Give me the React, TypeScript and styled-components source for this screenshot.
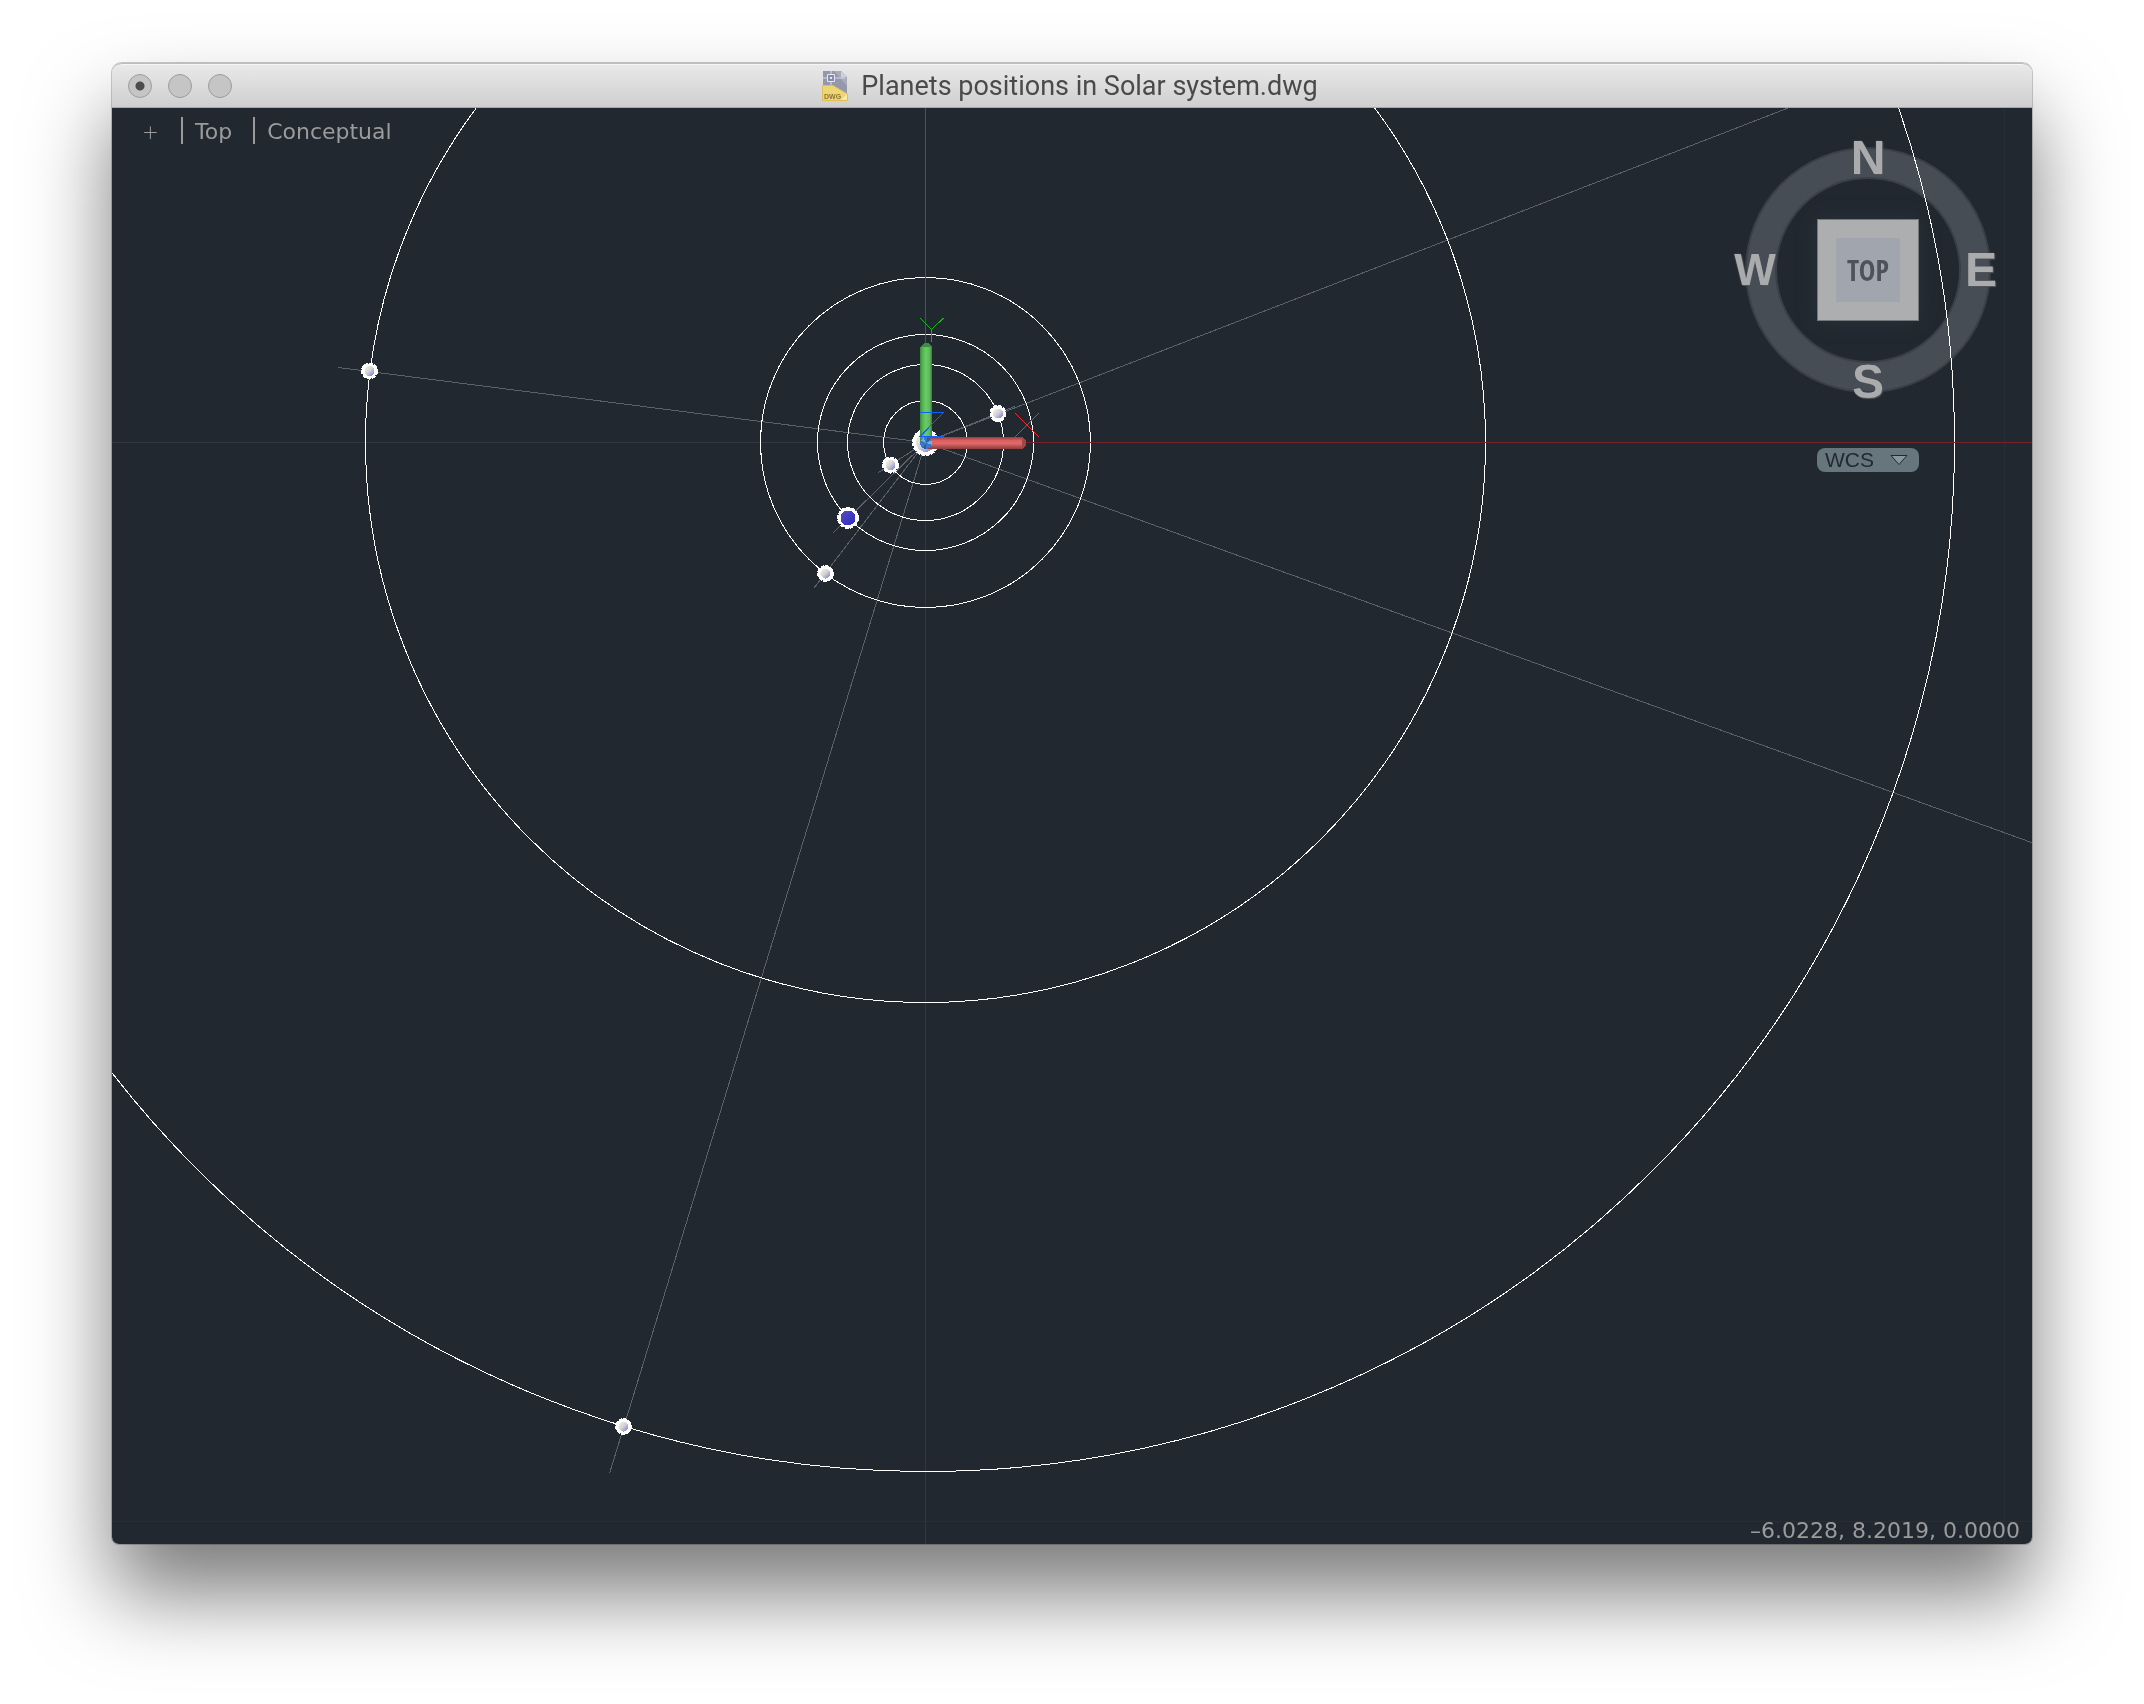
import React from "react";
import styled, { createGlobalStyle } from "styled-components";

const GlobalStyle = createGlobalStyle`
  *, *::before, *::after { box-sizing: border-box; }
  body { margin: 0; background: #fff; }
  button, select { margin: 0; padding: 0; border: 0; background: none; color: inherit; font: inherit; }
`;

const uiFont = `"DejaVu Sans", "Noto Sans", sans-serif`;
const sansFont = `"Liberation Sans", Arial, sans-serif`;

const Page = styled.main`
  padding: 63px 112px 150px;
  overflow: hidden;
`;

const Window = styled.section`
  border-radius: 10px 10px 7px 7px;
  box-shadow: 0 0 0 1px rgba(0, 0, 0, 0.2), 0 50px 84px rgba(0, 0, 0, 0.52);
`;

const TitleBar = styled.header`
  display: grid;
  grid-template-columns: 1fr auto 1fr;
  align-items: center;
  height: 45px;
  padding-left: 16px;
  border-top: 1px solid #bcbcbc;
  border-bottom: 1px solid #a8a8a8;
  border-radius: 10px 10px 0 0;
  background: linear-gradient(#e9e9e9, #cfcfcf);
  box-shadow: inset 0 1px 0 #f5f5f5;
`;

const Lights = styled.div`
  display: flex;
  gap: 16px;
`;

const Light = styled.button<{ $edited?: boolean }>`
  width: 24px;
  height: 24px;
  border: 1px solid #9c9c9c;
  border-radius: 50%;
  background: ${(p) =>
    p.$edited ? "radial-gradient(circle, #4c4c4c 4px, #c5c5c5 5px)" : "#c5c5c5"};
`;

const Title = styled.h1`
  display: flex;
  align-items: center;
  gap: 13px;
  margin: 0;
  padding-right: 20px;
  color: #4a4a4a;
  font: 400 27px/32px Roboto, Inter, sans-serif;
  white-space: nowrap;
`;

const Viewport = styled.div`
  display: grid;
  overflow: hidden;
  border-radius: 0 0 7px 7px;
  background: #212830;
`;

const Drawing = styled.svg`
  grid-area: 1 / 1;
  display: block;
  width: 100%;
  height: auto;
`;

const Hud = styled.div`
  grid-area: 1 / 1;
  display: flex;
  flex-direction: column;
  justify-content: space-between;
  color: #9b9b9b;
  font: 22px/26px ${uiFont};
`;

const HudTop = styled.div`
  display: flex;
  justify-content: space-between;
  align-items: flex-start;
`;

const ViewControls = styled.nav`
  display: flex;
  gap: 21px;
  padding: 9px 0 0 29px;
`;

const ViewButton = styled.button<{ $divided?: boolean }>`
  height: 27px;
  min-width: 19px;
  padding: ${(p) => (p.$divided ? "2px 0 0 12px" : "2px 0 0")};
  border-left: ${(p) => (p.$divided ? "2px solid #9b9b9b" : "0")};
  line-height: 25px;
`;

const Plus = styled.span`
  font-family: "DejaVu Sans Light", "DejaVu Sans", sans-serif;
  font-weight: 200;
  font-size: 20px;
`;

const NavTools = styled.div`
  display: flex;
  flex-direction: column;
  align-items: center;
  gap: 40px;
  padding: 24px 26px 0 0;
`;

const Compass = styled.div`
  display: grid;
  grid-template-columns: 50px 1fr 50px;
  grid-template-rows: 52px 1fr 52px;
  place-items: center;
  width: 276px;
  height: 276px;
`;

const Ring = styled.svg`
  grid-area: 1 / 1 / -1 / -1;
  width: 248px;
  height: 248px;
  mix-blend-mode: lighten;
`;

const areas = { N: "1 / 2", W: "2 / 1", E: "2 / 3", S: "3 / 2" };

const Direction = styled.button<{ $dir: keyof typeof areas }>`
  grid-area: ${(p) => areas[p.$dir]};
  color: #a9abad;
  font: 700 ${(p) => (p.$dir === "W" ? 44 : 48)}px/52px ${sansFont};
  text-shadow: 0 0 2px #55585c, 1px 1px 1px #55585c;
`;

const Cube = styled.button`
  grid-area: 2 / 2;
  display: grid;
  place-items: center;
  width: 102px;
  height: 102px;
  border: 1px solid #70787a;
  background: #acaeb0;
  box-shadow: 0 0 20px rgba(60, 70, 72, 0.35);
`;

const CubeFace = styled.span`
  width: 64px;
  height: 64px;
  background: #a0a5ae;
  color: #4e525b;
  font: 700 28px/64px "Liberation Sans Narrow", "Open Sans Condensed", "DejaVu Sans Condensed", sans-serif;
`;

const WcsField = styled.label`
  display: grid;
  align-items: center;
  width: 102px;
  height: 24px;
  border-radius: 8px;
  background: #67757c;
`;

const WcsSelect = styled.select`
  grid-area: 1 / 1;
  appearance: none;
  width: 100%;
  height: 24px;
  padding-left: 8px;
  color: #222931;
  font: 21px/24px ${sansFont};
`;

const WcsArrow = styled.svg`
  grid-area: 1 / 1;
  justify-self: end;
  width: 18px;
  height: 10px;
  margin-right: 11px;
  pointer-events: none;
`;

const Coordinates = styled.output`
  align-self: flex-end;
  padding-right: 12px;
`;

const orbits = [42, 78, 108, 165, 560, 1029];

const rays = [
  [-47, 30],
  [89, -36],
  [-92.5, 90.5],
  [-111.5, 145.5],
  [-587.5, -75],
  [-316, 1031],
  [1200, 434],
  [900, -349],
];

const planets = [
  { name: "Mercury", x: -35, y: 22.5, r: 8.5, core: 5 },
  { name: "Venus", x: 72.5, y: -29, r: 8.5, core: 5 },
  { name: "Earth", x: -77.5, y: 75.5, r: 11, core: 7.5, fill: "url(#earth)" },
  { name: "Mars", x: -100, y: 131, r: 8.5, core: 5 },
  { name: "Jupiter", x: -556, y: -71.5, r: 8.5, core: 5 },
  { name: "Saturn", x: -302, y: 984, r: 8.5, core: 5 },
  { name: "Sun", x: 0, y: 0, r: 13.5, core: 9.5 },
];

function SolarDrawing() {
  return (
    <Drawing viewBox="0 0 1920 1436" aria-label="Planet orbits">
      <defs>
        <linearGradient id="planet" x1="0" y1="0" x2="1" y2="1">
          <stop offset="0.15" stopColor="#eeeed8" />
          <stop offset="0.5" stopColor="#d2d0d8" />
          <stop offset="1" stopColor="#6f6fd0" />
        </linearGradient>
        <linearGradient id="earth" x1="0" y1="0" x2="1" y2="1">
          <stop offset="0" stopColor="#5a4cb8" />
          <stop offset="1" stopColor="#2c2cc8" />
        </linearGradient>
        <linearGradient id="green" x1="0" y1="0" x2="1" y2="0">
          <stop offset="0" stopColor="#3a8a38" />
          <stop offset="0.25" stopColor="#58b856" />
          <stop offset="0.5" stopColor="#6cca68" />
          <stop offset="0.8" stopColor="#5cb85a" />
          <stop offset="1" stopColor="#3c7c3c" />
        </linearGradient>
        <linearGradient id="red" x1="0" y1="0" x2="0" y2="1">
          <stop offset="0" stopColor="#963c3c" />
          <stop offset="0.3" stopColor="#dc6262" />
          <stop offset="0.55" stopColor="#e06868" />
          <stop offset="1" stopColor="#8c3c3c" />
        </linearGradient>
      </defs>
      <g transform="translate(813.5 334.5)" fill="none" shapeRendering="crispEdges">
        <path d="M1079-400V1200M-900 1079H1200" stroke="#252e3b" />
        <path d="M-900 0H0V1200" stroke="#303846" />
        {rays.map(([x, y]) => (
          <line key={x} x2={x} y2={y} stroke="#5c6068" />
        ))}
        {orbits.map((r) => (
          <circle key={r} r={r} stroke="#fff" />
        ))}
        <path d="M0 0V-400" stroke="#1f7424" />
        <path d="M0 0H1200" stroke="#782026" />
        {planets.map((p) => (
          <g key={p.name} transform={`translate(${p.x} ${p.y})`}>
            <circle r={p.r - 2} fill="#fff" stroke="#fff" strokeWidth="2" />
            <circle r={p.r - 1} stroke="#fff" strokeWidth="2" strokeDasharray="4 1" />
            <circle r={p.core} fill={p.fill ?? "url(#planet)"} />
          </g>
        ))}
        <path d="M-5.5 0V-95.5L-1.5-99.5H2.5L6.5-95.5V0Z" fill="url(#green)" />
        <path d="M-5.5-95.5L-1.5-99.5H2.5L6.5-95.5Z" fill="#3a9038" />
        <path d="M0-5.5H96.5L100.5-1.5V2.5L96.5 6.5H0Z" fill="url(#red)" />
        <path d="M96.5-5.5L100.5-1.5V2.5L96.5 6.5Z" fill="#9c4848" />
        <circle cx="0.5" cy="0.5" r="6" fill="#3a78c4" />
        <path d="M0.5 0.5L-5-2L-2-5ZM0.5 0.5L6-2L6 2Z" fill="#74acec" />
        <path d="M0.5 0.5L2-5.5L5-3.5ZM0.5 0.5L-3 5.5L0 6.5Z" fill="#2a5ca0" />
        <path d="M-5.5-124.5L6-113L18-124.5M6-113V-101" stroke="#12b414" />
        <path d="M89.5-29.5L113.5-5.5M113.5-29.5L89.5-5.5" stroke="#f02c2c" />
        <path d="M-5.5-30H18L-5.5-6H18" stroke="#0a62ff" />
      </g>
    </Drawing>
  );
}

function DwgIcon() {
  return (
    <svg width="26" height="32" viewBox="0 0 26 32" aria-hidden="true">
      <path d="M1 1H19L25 7V30H1Z" fill="#9598ac" />
      <path d="M12 1H19L25 7V16Z" fill="#a8abbc" />
      <path d="M19 1L25 7H19Z" fill="#cfd2de" />
      <path d="M1 8H23M9 1V15" stroke="#d8dae6" fill="none" />
      <path d="M5.5 4.5H12.5V11.5H5.5Z" fill="#8a8da6" stroke="#e4e5ee" />
      <path d="M8 7H10V9H8Z" fill="#e4e5ee" />
      <path d="M0.5 15.5H11L25.5 24V30.5H0.5Z" fill="#ecd676" stroke="#e0be50" />
      <path d="M19 30L25 24V30Z" fill="#f8eaa8" />
      <text x="2" y="29" fill="#8a7434" fontFamily={sansFont} fontSize="7" fontWeight="700">
        DWG
      </text>
    </svg>
  );
}

export default function App() {
  return (
    <Page>
      <GlobalStyle />
      <Window>
        <TitleBar>
          <Lights>
            <Light $edited aria-label="Close" />
            <Light aria-label="Minimize" />
            <Light aria-label="Zoom" />
          </Lights>
          <Title>
            <DwgIcon />
            Planets positions in Solar system.dwg
          </Title>
        </TitleBar>
        <Viewport>
          <SolarDrawing />
          <Hud>
            <HudTop>
              <ViewControls aria-label="Viewport controls">
                <ViewButton><Plus>+</Plus></ViewButton>
                <ViewButton $divided>Top</ViewButton>
                <ViewButton $divided>Conceptual</ViewButton>
              </ViewControls>
              <NavTools>
                <Compass>
                  <Ring viewBox="-124 -124 248 248" aria-hidden="true">
                    <circle r="107" fill="none" stroke="#3a3f48" strokeWidth="32" />
                    <circle r="107" fill="none" stroke="#474d55" strokeWidth="28" />
                  </Ring>
                  <Direction $dir="N">N</Direction>
                  <Direction $dir="W">W</Direction>
                  <Cube><CubeFace>TOP</CubeFace></Cube>
                  <Direction $dir="E">E</Direction>
                  <Direction $dir="S">S</Direction>
                </Compass>
                <WcsField>
                  <WcsSelect aria-label="Coordinate system" defaultValue="WCS">
                    <option>WCS</option>
                  </WcsSelect>
                  <WcsArrow viewBox="0 0 18 10" aria-hidden="true">
                    <path d="M1 .5H17L9 9.5Z" fill="#86979e" stroke="#222931" />
                  </WcsArrow>
                </WcsField>
              </NavTools>
            </HudTop>
            <Coordinates>–6.0228, 8.2019, 0.0000</Coordinates>
          </Hud>
        </Viewport>
      </Window>
    </Page>
  );
}
